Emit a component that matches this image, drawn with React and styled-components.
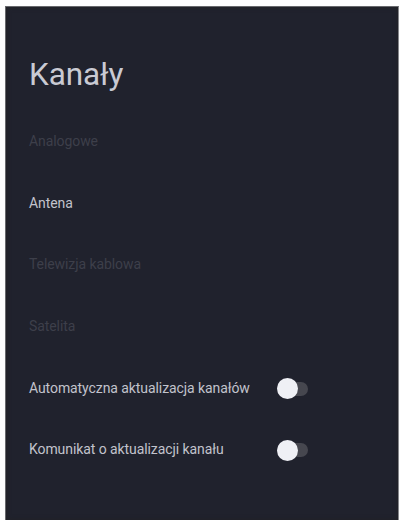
import React from "react";
import styled, { createGlobalStyle } from "styled-components";

const GlobalStyle = createGlobalStyle`
  body {
    margin: 0;
    background: #fdfdfe;
    font-family: Roboto, "Liberation Sans", sans-serif;
  }
`;

const Panel = styled.main`
  box-sizing: border-box;
  width: 394px;
  height: 514px;
  margin: 6px 0 0 5px;
  padding: 48px 23px 0;
  overflow: hidden;
  background: #20222d;
  border: 1px solid #66676c;
  border-right-color: #86878b;
  border-bottom: none;
  box-shadow: inset 0 0 5px #232326;
`;

const Title = styled.h1`
  margin: 0;
  height: 40px;
  line-height: 40px;
  font-size: 31.5px;
  letter-spacing: -0.1px;
  font-weight: 400;
  color: #c9cad3;
`;

const List = styled.div`
  display: flex;
  flex-direction: column;
  margin-top: 16px;
`;

const Row = styled.div`
  display: flex;
  align-items: center;
  height: 61.7px;
  width: 279px;
`;

const Label = styled.span`
  flex: 1;
  padding-bottom: 2px;
  white-space: nowrap;
  font-size: 14px;
  letter-spacing: -0.08px;
  color: ${(props) => (props.$disabled ? "#3d3f4a" : "#c2c3cc")};
`;

const Track = styled.div`
  display: flex;
  align-items: center;
  width: 31px;
  height: 14px;
  border-radius: 7px;
  background: #46474f;
`;

const Knob = styled.div`
  width: 21px;
  height: 21px;
  flex-shrink: 0;
  border-radius: 50%;
  background: #eff0f5;
`;

const items = [
  { label: "Analogowe", disabled: true },
  { label: "Antena" },
  { label: "Telewizja kablowa", disabled: true },
  { label: "Satelita", disabled: true },
  { label: "Automatyczna aktualizacja kanałów", toggle: true },
  { label: "Komunikat o aktualizacji kanału", toggle: true },
];

export default function App() {
  return (
    <>
      <GlobalStyle />
      <Panel>
        <Title>Kanały</Title>
        <List>
          {items.map((item) => (
            <Row key={item.label}>
              <Label $disabled={item.disabled}>{item.label}</Label>
              {item.toggle && (
                <Track>
                  <Knob />
                </Track>
              )}
            </Row>
          ))}
        </List>
      </Panel>
    </>
  );
}
